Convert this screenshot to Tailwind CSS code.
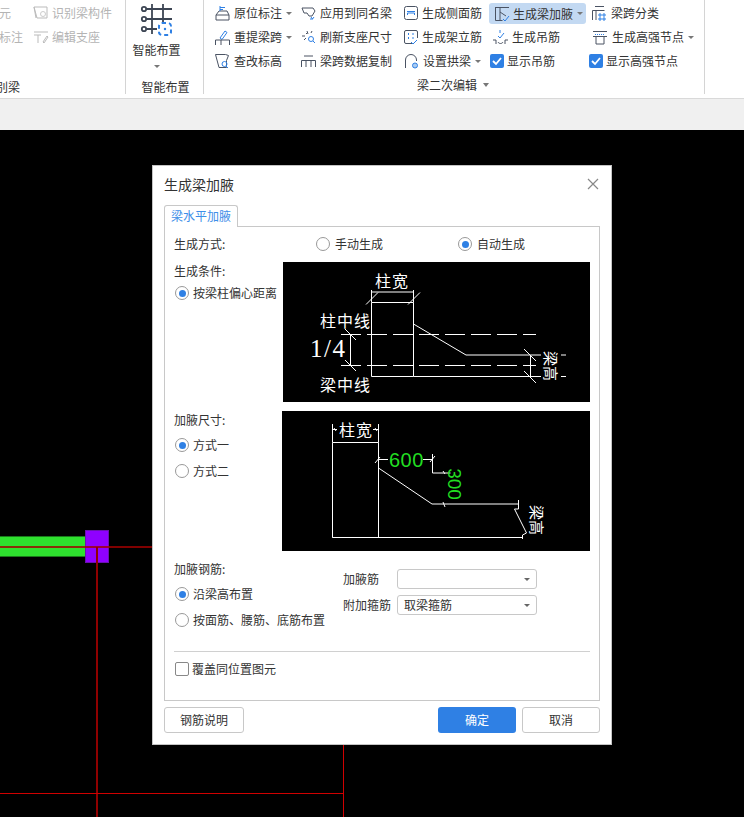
<!DOCTYPE html>
<html lang="en">
<head>
    <meta charset="UTF-8">
    <title>生成梁加腋</title>
    <script src="https://cdn.jsdelivr.net/npm/@tailwindcss/browser@4"></script>
</head>
<body class="w-[744px] h-[817px] overflow-hidden flex flex-col bg-black text-[12px] leading-[18px] text-[#333] font-['Noto_Sans_CJK_SC',sans-serif]">

<!-- Ribbon -->
<div class="h-[99px] bg-white border-b border-[#d9d9d9] flex shrink-0 overflow-hidden">
    <!-- Group: identify -->
    <div class="w-[126px] h-[94px] border-r border-[#d4d4d4] flex flex-col text-[#b4b4b4] shrink-0">
        <div class="flex items-center h-[24px] mt-[1px]">
            <span class="w-[34px] -ml-[1px]">元</span>
            <svg class="w-[16px] h-[16px] mr-[3px]" viewBox="0 0 16 16" fill="none" stroke="#bbb"><path d="M1 2h13v11H4zM1 2l2 11"/><circle cx="10" cy="9" r="2.5" stroke="#ccc"/></svg>
            <span>识别梁构件</span>
        </div>
        <div class="flex items-center h-[24px]">
            <span class="w-[34px] -ml-[1px]">标注</span>
            <svg class="w-[16px] h-[16px] mr-[3px]" viewBox="0 0 16 16" fill="none" stroke="#bbb"><path d="M1 3h14M1 6h7M5 6v8M10 13l4-6 1 1-4 6z"/></svg>
            <span>编辑支座</span>
        </div>
        <div class="mt-auto -ml-[4px] mb-[-2px] text-[#333]">别梁</div>
    </div>

    <!-- Group: smart layout -->
    <div class="w-[78px] h-[94px] border-r border-[#d4d4d4] flex flex-col items-center shrink-0">
        <svg class="w-[34px] h-[34px] mt-[3px] ml-[-16px]" viewBox="0 0 34 34" fill="none" stroke="#3d4654" stroke-width="1.8">
            <path d="M7 6h25M7 16h25M7 26h10M12 1v30M23 1v18"/>
            <circle cx="4" cy="6" r="2.2"/><circle cx="4" cy="16" r="2.2"/><circle cx="4" cy="26" r="2.2"/>
            <rect x="19" y="20" width="12" height="12" rx="3" stroke="#2f80e4" stroke-width="2" stroke-dasharray="4 3"/>
            <circle cx="25" cy="26" r="1.2" fill="#2f80e4" stroke="none"/>
        </svg>
        <div class="mt-[4px] ml-[-16px]">智能布置</div>
        <span class="mt-[6px] ml-[-16px] w-0 h-0 border-x-[3px] border-t-[3px] border-x-transparent border-t-[#777]"></span>
        <div class="mt-auto ml-[2px] mb-[-2px]">智能布置</div>
    </div>

    <!-- Group: beam secondary edit -->
    <div class="w-[501px] h-[94px] border-r border-[#d4d4d4] pl-[11px] flex flex-col shrink-0">
        <div class="grid grid-cols-[86px_103px_85px_100px_1fr] grid-rows-[24px_24px_24px] mt-[1px]">
            <div class="flex items-center gap-[4px]">
                <svg class="w-[15px] h-[16px]" viewBox="0 0 15 16" fill="none" stroke="#4a5363"><path d="M4 6h8l2 4v5H1v-5zM1 10h13"/><path d="M5 1v5M5 2.5h5M5 4.5h3" stroke="#2f80e4"/></svg>
                <span>原位标注</span>
                <span class="w-0 h-0 border-x-[3px] border-t-[3px] border-x-transparent border-t-[#777]"></span>
            </div>
            <div class="flex items-center gap-[4px]">
                <svg class="w-[15px] h-[16px]" viewBox="0 0 15 16" fill="none" stroke="#4a5363"><path d="M1 3h11l2 3-3 5H8L6 8H3z"/><path d="M9 14h3M10 12l1.5 2 1.5-2" stroke="#2f80e4"/></svg>
                <span>应用到同名梁</span>
            </div>
            <div class="flex items-center gap-[4px]">
                <svg class="w-[14px] h-[16px]" viewBox="0 0 14 16" fill="none" stroke="#4a5363"><rect x="0.5" y="1.5" width="13" height="13" rx="2"/><path d="M3 6.5h8M3.5 10V8h7v2" stroke="#2f80e4"/></svg>
                <span>生成侧面筋</span>
            </div>
            <div class="flex items-center w-[97px] h-[21px] mt-[2px] bg-[#c3d9f2] rounded-[3px] pl-[5px] gap-[3px]">
                <svg class="w-[16px] h-[16px] shrink-0" viewBox="0 0 16 16" fill="none" stroke="#4a5363"><path d="M1 1.5h14M1.5 1.5v13h7M6 1.5v13M6 6l6 4"/><path d="M9 13l2 2 4-5" stroke="#2f80e4"/></svg>
                <span>生成梁加腋</span>
                <span class="ml-[1px] w-0 h-0 border-x-[3px] border-t-[3px] border-x-transparent border-t-[#777]"></span>
            </div>
            <div class="flex items-center gap-[4px] pl-[3px]">
                <svg class="w-[15px] h-[16px]" viewBox="0 0 15 16" fill="none" stroke="#4a5363"><path d="M3 1.5h9M0.5 15V5.500h12M4 5.500V15"/><path d="M7 9h2v2H7zM11 9h2v2h-2zM7 13h2v2H7zM11 13h2v2h-2z" stroke="#2f80e4"/></svg>
                <span>梁跨分类</span>
            </div>

            <div class="flex items-center gap-[4px]">
                <svg class="w-[15px] h-[16px]" viewBox="0 0 15 16" fill="none" stroke="#4a5363"><path d="M5 9l5-7 2 1.500-5 7z" stroke="#2f80e4"/><path d="M0.500 16v-5h14v5M6 11v5"/></svg>
                <span>重提梁跨</span>
                <span class="w-0 h-0 border-x-[3px] border-t-[3px] border-x-transparent border-t-[#777]"></span>
            </div>
            <div class="flex items-center gap-[4px]">
                <svg class="w-[15px] h-[16px]" viewBox="0 0 15 16" fill="none" stroke="#4a5363"><path d="M1 7h3M6 2l1 3M10 4l1-2M3 11l2-2M5 4l1 1"/><circle cx="10" cy="10" r="2.500" stroke="#2f80e4"/><path d="M12 12l2 2" stroke="#2f80e4"/></svg>
                <span>刷新支座尺寸</span>
            </div>
            <div class="flex items-center gap-[4px]">
                <svg class="w-[14px] h-[16px]" viewBox="0 0 14 16" fill="none" stroke="#4a5363"><path d="M8 14.500H2A1.500 1.500 0 0 1 .5 13V3A1.500 1.500 0 0 1 2 1.500h10A1.500 1.500 0 0 1 13.500 3v6"/><path d="M4 5h1M8.500 5h1M4 9h1M8.500 9h1" stroke="#2f80e4" stroke-width="2"/><path d="M7 13l2 2 4-4" stroke="#2f80e4"/></svg>
                <span>生成架立筋</span>
            </div>
            <div class="flex items-center gap-[4px] pl-[3px]">
                <svg class="w-[17px] h-[16px]" viewBox="0 0 17 16" fill="none" stroke="#4a5363"><path d="M1 11h3v4M16 11h-3v4M6 13c1 2 4 2 5 0"/><path d="M6 7l2 2 4-5M8 1v3" stroke="#2f80e4"/></svg>
                <span class="ml-[-1px]">生成吊筋</span>
            </div>
            <div class="flex items-center gap-[4px] pl-[3px]">
                <svg class="w-[16px] h-[16px]" viewBox="0 0 16 16" fill="none" stroke="#4a5363"><path d="M1 2.500h14" /><path d="M3 5.500h10" stroke="#2f80e4" stroke-dasharray="1 1"/><path d="M1 7.500h14M4 7.500V15h8V7.500"/></svg>
                <span>生成高强节点</span>
                <span class="w-0 h-0 border-x-[3px] border-t-[3px] border-x-transparent border-t-[#777]"></span>
            </div>

            <div class="flex items-center gap-[4px]">
                <svg class="w-[15px] h-[16px]" viewBox="0 0 15 16" fill="none" stroke="#4a5363"><path d="M0.500 1.500h10l3 1-2 5v7H4z"/><circle cx="9.500" cy="11" r="2.500" stroke="#2f80e4"/><path d="M11 13l2 2" stroke="#2f80e4"/></svg>
                <span>查改标高</span>
            </div>
            <div class="flex items-center gap-[4px]">
                <svg class="w-[15px] h-[16px]" viewBox="0 0 15 16" fill="none" stroke="#4a5363"><path d="M3 3h9M0.500 14V7.500h14V14M5 7.500V14M10 7.500V14"/></svg>
                <span>梁跨数据复制</span>
            </div>
            <div class="flex items-center gap-[4px]">
                <svg class="w-[15px] h-[16px]" viewBox="0 0 15 16" fill="none" stroke="#4a5363"><path d="M1.500 15V7a5.500 5.500 0 0 1 11 0v1"/><circle cx="11" cy="12.500" r="2.500" fill="#a9cbf2" stroke="#2f80e4"/></svg>
                <span>设置拱梁</span>
                <span class="w-0 h-0 border-x-[3px] border-t-[3px] border-x-transparent border-t-[#777]"></span>
            </div>
            <div class="flex items-center gap-[3px] pl-[1px]">
                <span class="w-[14px] h-[14px] rounded-[2px] bg-[#2f80e4] flex items-center justify-center">
                    <svg class="w-[10px] h-[10px]" viewBox="0 0 10 10" fill="none" stroke="#fff" stroke-width="1.800"><path d="M1 5l3 3 5-6"/></svg>
                </span>
                <span>显示吊筋</span>
            </div>
            <div class="flex items-center gap-[3px]">
                <span class="w-[14px] h-[14px] rounded-[2px] bg-[#2f80e4] flex items-center justify-center">
                    <svg class="w-[10px] h-[10px]" viewBox="0 0 10 10" fill="none" stroke="#fff" stroke-width="1.800"><path d="M1 5l3 3 5-6"/></svg>
                </span>
                <span>显示高强节点</span>
            </div>
        </div>
        <div class="mt-[3px] ml-[202px] flex items-center gap-[6px]">
            <span>梁二次编辑</span>
            <span class="w-0 h-0 border-x-[3.500px] border-t-[4px] border-x-transparent border-t-[#777]"></span>
        </div>
    </div>
</div>

<!-- Strip under ribbon -->
<div class="h-[31px] bg-[#f0f0f0] shrink-0"></div>

<!-- CAD canvas -->
<div class="relative flex-1 bg-black">
    <div class="absolute left-0 top-[406px] w-[85px] h-[21px] bg-[#2ee02e] border-y border-[#1a7a1a]"></div>
    <div class="absolute left-[85px] top-[400px] w-[24px] h-[33px] bg-[#8f00ff] border border-[#6a10b0]"></div>
    <div class="absolute left-0 top-[416px] w-[152px] h-[2px] bg-[#a00000]/80"></div>
    <div class="absolute left-[96px] top-[417px] w-[2px] h-[270px] bg-[#8f0000]"></div>
    <div class="absolute left-0 top-[663px] w-[344px] h-px bg-[#d00000]"></div>
    <div class="absolute left-[343px] top-[615px] w-px h-[72px] bg-[#d00000]"></div>

    <!-- Dialog -->
    <div class="absolute left-[152px] top-[35px] w-[460px] h-[580px] bg-white border border-[#c4c4c4] flex flex-col px-[11px]">
        <div class="h-[39px] pb-[4px] flex items-center justify-between shrink-0">
            <span class="text-[14px]">生成梁加腋</span>
            <svg class="w-[12px] h-[12px] mr-[1px]" viewBox="0 0 12 12" fill="none" stroke="#888" stroke-width="1.200"><path d="M1 1l10 10M11 1L1 11"/></svg>
        </div>

        <!-- Tab -->
        <div class="relative z-10 w-[74px] h-[22px] -mb-px pb-px bg-white border border-b-0 border-[#c8c8c8] rounded-t-[3px] flex items-center justify-center text-[#3d8ee8] shrink-0">梁水平加腋</div>

        <!-- Panel -->
        <div class="h-[475px] border border-[#c8c8c8] shrink-0">
            <div class="h-[34px] flex items-center pl-[9px]">
                <span class="w-[142px]">生成方式:</span>
                <label class="w-[142px] flex items-center gap-[5px]">
                    <span class="w-[14px] h-[14px] rounded-full border border-[#999] bg-white"></span>
                    <span>手动生成</span>
                </label>
                <label class="flex items-center gap-[5px]">
                    <span class="w-[14px] h-[14px] rounded-full border border-[#999] bg-white flex items-center justify-center"><span class="w-[7px] h-[7px] rounded-full bg-[#2f80e4]"></span></span>
                    <span>自动生成</span>
                </label>
            </div>

            <div class="flex h-[140px] mt-px">
                <div class="w-[118px] pl-[9px]">
                    <div class="h-[18px]">生成条件:</div>
                    <label class="h-[26px] flex items-center gap-[4px] pl-px whitespace-nowrap">
                        <span class="w-[14px] h-[14px] rounded-full border border-[#999] bg-white flex items-center justify-center shrink-0"><span class="w-[7px] h-[7px] rounded-full bg-[#2f80e4]"></span></span>
                        <span>按梁柱偏心距离</span>
                    </label>
                </div>
                <svg class="w-[307px] h-[140px] bg-black" viewBox="0 0 307 140" fill="none" stroke="#fff">
                    <path d="M88.500 40.500h42v74h-42zM88.500 28v12.500M130.500 28v12.500M88.500 30h42M83 42.500l12-12M125 42.500l12-12"/>
                    <path d="M58 72.500h195M58 103.500h195" stroke-dasharray="20 6"/>
                    <path d="M67.500 72.500v31M62 67l11 11M62 98l11 11"/>
                    <path d="M130.500 62L183 93h70M130.500 114.500H253"/>
                    <path d="M247.500 93v21M241 87l12 12M241 109l12 12M253 93h5M278 93h5M253 114.500h5M278 114.500h5"/>
                    <g fill="#fff" stroke="none" font-family="Noto Sans CJK SC, sans-serif" font-size="16">
                        <text x="92" y="25" letter-spacing="1">柱宽</text>
                        <text x="37" y="65" letter-spacing="1">柱中线</text>
                        <text x="37" y="129" letter-spacing="1">梁中线</text>
                        <text x="27" y="95" font-size="25" font-family="Liberation Serif, serif" letter-spacing="1.500">1/4</text>
                        <text transform="translate(262 104) rotate(90)" font-size="15" text-anchor="middle">梁高</text>
                    </g>
                </svg>
            </div>

            <div class="flex h-[140px] mt-[9px]">
                <div class="w-[117px] pl-[9px]">
                    <div class="h-[18px]">加腋尺寸:</div>
                    <label class="h-[26px] mt-[3px] flex items-center gap-[4px] pl-px">
                        <span class="w-[14px] h-[14px] rounded-full border border-[#999] bg-white flex items-center justify-center"><span class="w-[7px] h-[7px] rounded-full bg-[#2f80e4]"></span></span>
                        <span>方式一</span>
                    </label>
                    <label class="h-[26px] flex items-center gap-[4px] pl-px">
                        <span class="w-[14px] h-[14px] rounded-full border border-[#999] bg-white"></span>
                        <span>方式二</span>
                    </label>
                </div>
                <svg class="w-[308px] h-[140px] bg-black" viewBox="0 0 308 140" fill="none" stroke="#fff">
                    <path d="M50.500 31.500h46v95h-46zM50.500 13v18.500M96.500 13v18.500M50.500 18.500H55M91 18.500h5.500M52 17l2 3M93 17l2 3"/>
                    <path d="M96.500 48.500H106M141 48.500h10M150.500 43v19h18M93 52l5-6M148 51l5-6M96.500 57L150 93h87M161 60l2 3M161 91l2 5M236.500 89v9h-4l12 24-4 2v4M50.500 126.500H240"/>
                    <g fill="#fff" stroke="none" font-family="Noto Sans CJK SC, sans-serif" font-size="16">
                        <text x="57" y="25" letter-spacing="1">柱宽</text>
                        <text transform="translate(249 109) rotate(90)" font-size="15" text-anchor="middle">梁高</text>
                    </g>
                    <g fill="#22dd22" stroke="none" font-family="Liberation Sans, sans-serif" font-size="20">
                        <text x="107" y="56" letter-spacing="0.500">600</text>
                        <text transform="translate(166 73) rotate(90)" text-anchor="middle" font-size="19">300</text>
                    </g>
                </svg>
            </div>

            <div class="flex pl-[9px] pt-[9px] h-[82px]">
                <div class="w-[169px]">
                    <div class="h-[18px]">加腋钢筋:</div>
                    <label class="h-[26px] mt-[3px] flex items-center gap-[4px] pl-px">
                        <span class="w-[14px] h-[14px] rounded-full border border-[#999] bg-white flex items-center justify-center"><span class="w-[7px] h-[7px] rounded-full bg-[#2f80e4]"></span></span>
                        <span>沿梁高布置</span>
                    </label>
                    <label class="h-[26px] flex items-center gap-[4px] pl-px whitespace-nowrap">
                        <span class="w-[14px] h-[14px] rounded-full border border-[#999] bg-white shrink-0"></span>
                        <span>按面筋、腰筋、底筋布置</span>
                    </label>
                </div>
                <div class="grid grid-cols-[54px_140px] auto-rows-[20px] gap-y-[6px] mt-[9px] items-center">
                    <span>加腋筋</span>
                    <div class="h-[20px] border border-[#c8c8c8] rounded-[3px] flex items-center justify-end pr-[6px]">
                        <span class="w-0 h-0 border-x-[3px] border-t-[3px] border-x-transparent border-t-[#666]"></span>
                    </div>
                    <span>附加箍筋</span>
                    <div class="h-[20px] border border-[#c8c8c8] rounded-[3px] flex items-center justify-between pl-[6px] pr-[6px]">
                        <span>取梁箍筋</span>
                        <span class="w-0 h-0 border-x-[3px] border-t-[3px] border-x-transparent border-t-[#666]"></span>
                    </div>
                </div>
            </div>

            <div class="ml-[9px] w-[416px] h-px bg-[#d0d0d0] mt-[18px]"></div>
            <label class="ml-[10px] mt-[8px] flex items-center gap-[3px]">
                <span class="w-[14px] h-[14px] rounded-[2px] border border-[#888] bg-white"></span>
                <span>覆盖同位置图元</span>
            </label>
        </div>

        <!-- Footer buttons -->
        <div class="flex mt-[6px] gap-[6px]">
            <button class="w-[80px] h-[26px] border border-[#c8c8c8] rounded-[3px] bg-white mr-auto">钢筋说明</button>
            <button class="w-[78px] h-[26px] rounded-[3px] bg-[#2f80e4] text-white">确定</button>
            <button class="w-[78px] h-[26px] border border-[#c8c8c8] rounded-[3px] bg-white">取消</button>
        </div>
    </div>
</div>

</body>
</html>
